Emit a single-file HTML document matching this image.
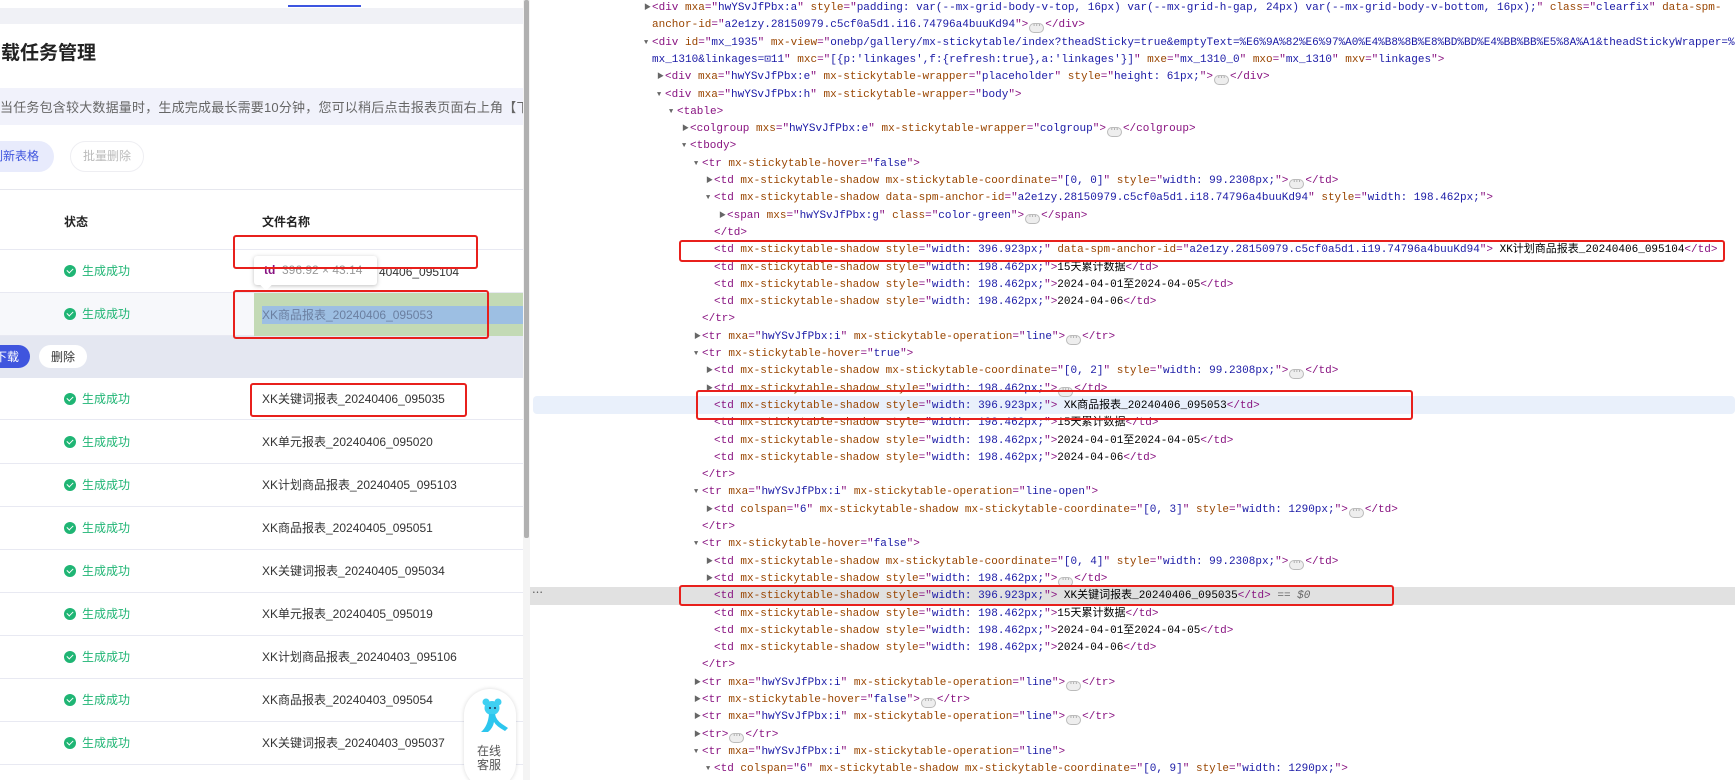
<!DOCTYPE html>
<html><head><meta charset="utf-8">
<style>
*{margin:0;padding:0;box-sizing:border-box}
body{width:1735px;height:780px;overflow:hidden;background:#fff;position:relative;font-family:"Liberation Sans","Noto Sans CJK SC",sans-serif}
.a{position:absolute}
#left{position:absolute;left:0;top:0;width:523px;height:780px;overflow:hidden;background:#fff}
.row{position:absolute;left:0;width:523px;height:43px;border-bottom:1px solid #e8e9f2}
.st{position:absolute;left:64px;top:14px;font-size:12px;color:#1fb574;line-height:14px}
.st i{display:inline-block;width:12px;height:12px;border-radius:50%;background:#1fb574;vertical-align:-2px;margin-right:6px;position:relative}
.st i:after{content:"";position:absolute;left:3px;top:2.5px;width:5px;height:3px;border-left:1.6px solid #fff;border-bottom:1.6px solid #fff;transform:rotate(-45deg)}
.fn{position:absolute;left:262px;top:14px;font-size:12px;color:#333;line-height:14px;white-space:nowrap}
.red{position:absolute;border:2px solid #e8201c;border-radius:3px}
#dev{position:absolute;left:530px;top:0;width:1205px;height:780px;overflow:hidden;font-family:"Liberation Mono","Noto Sans CJK SC",monospace;font-size:11px}
.l{position:absolute;height:17.3px;line-height:17.3px;white-space:nowrap;color:#000}
.t{color:#881280}.n{color:#994500}.v{color:#1a1aa6}
.tr{position:absolute;left:-8px;top:0;font-size:7px;color:#666}
.e{display:inline-block;width:15px;height:10px;border:1px solid #bbb;border-radius:5px;background:#eee;font-size:8px;line-height:6px;text-align:center;color:#666;vertical-align:-1px;margin:0 1px}
</style></head><body>
<div id="left">
  <div class="a" style="left:288px;top:5px;width:73px;height:2px;background:#3d55e0"></div>
  <div class="a" style="left:0;top:8px;width:523px;height:16px;background:#f0f1f6"></div>
  <div class="a" style="left:-18px;top:42px;font-size:19px;font-weight:bold;color:#222;line-height:24px">下载任务管理</div>
  <div class="a" style="left:0;top:88px;width:523px;height:37px;background:#f1f2fb"></div>
  <div class="a" style="left:0;top:100px;font-size:13px;color:#666;line-height:16px;white-space:nowrap;letter-spacing:0.2px">当任务包含较大数据量时，生成完成最长需要10分钟，您可以稍后点击报表页面右上角【下载任务管理】</div>
  <div class="a" style="left:-30px;top:141px;width:84px;height:31px;border-radius:16px;background:#e8ebfc"></div>
  <div class="a" style="left:-9px;top:149px;font-size:12px;color:#3f55de;line-height:15px">刷新表格</div>
  <div class="a" style="left:70px;top:141px;width:74px;height:31px;border-radius:16px;border:1px solid #eeeef2"></div>
  <div class="a" style="left:83px;top:149px;font-size:12px;color:#bbb;line-height:15px">批量删除</div>
  <div class="a" style="left:0;top:189px;width:523px;height:1px;background:#e6e7ee"></div>
  <div class="row" style="top:190px;height:60px"></div>
  <div class="a" style="left:64px;top:213px;font-size:12px;font-weight:bold;color:#222">状态</div>
  <div class="a" style="left:262px;top:213px;font-size:12px;font-weight:bold;color:#222">文件名称</div>
  <div class="row" style="top:250px"><div class="st"><i></i>生成成功</div></div>
  <div class="row" style="top:293px;background:#f7f8fb"><div class="st"><i></i>生成成功</div></div>
  <div class="a" style="left:254px;top:293px;width:269px;height:43px;background:#c3dab5"></div>
  <div class="a" style="left:262px;top:306px;width:261px;height:18px;background:#9dbfe3"></div>
  <div class="a" style="left:262px;top:308px;font-size:12px;color:#6b7fa0;line-height:14px">XK商品报表_20240406_095053</div>
  <div class="a" style="left:0;top:336px;width:523px;height:42px;background:#e4e7f1"></div>
  <div class="a" style="left:-20px;top:345px;width:50px;height:23px;border-radius:12px;background:#3f55de"></div>
  <div class="a" style="left:-5px;top:350px;font-size:12px;color:#fff;line-height:14px">下载</div>
  <div class="a" style="left:39px;top:345px;width:48px;height:23px;border-radius:12px;background:#fff"></div>
  <div class="a" style="left:51px;top:350px;font-size:12px;color:#333;line-height:14px">删除</div>
  <div class="row" style="top:378px;height:42px"><div class="st"><i></i>生成成功</div><div class="fn">XK关键词报表_20240406_095035</div></div>
  <div class="row" style="top:421px"><div class="st"><i></i>生成成功</div><div class="fn">XK单元报表_20240406_095020</div></div>
  <div class="row" style="top:464px"><div class="st"><i></i>生成成功</div><div class="fn">XK计划商品报表_20240405_095103</div></div>
  <div class="row" style="top:507px"><div class="st"><i></i>生成成功</div><div class="fn">XK商品报表_20240405_095051</div></div>
  <div class="row" style="top:550px"><div class="st"><i></i>生成成功</div><div class="fn">XK关键词报表_20240405_095034</div></div>
  <div class="row" style="top:593px"><div class="st"><i></i>生成成功</div><div class="fn">XK单元报表_20240405_095019</div></div>
  <div class="row" style="top:636px"><div class="st"><i></i>生成成功</div><div class="fn">XK计划商品报表_20240403_095106</div></div>
  <div class="row" style="top:679px"><div class="st"><i></i>生成成功</div><div class="fn">XK商品报表_20240403_095054</div></div>
  <div class="row" style="top:722px"><div class="st"><i></i>生成成功</div><div class="fn">XK关键词报表_20240403_095037</div></div>
  <div class="row" style="top:765px"></div>
  <div class="a" style="left:254px;top:256px;width:123px;height:29px;background:#fff;border-radius:3px;box-shadow:0 1px 4px rgba(0,0,0,.25)"></div>
  <div class="a" style="left:262px;top:281px;width:8px;height:8px;background:#fff;transform:rotate(45deg)"></div>
  <div class="a" style="left:264px;top:263px;font-size:12px;line-height:14px;white-space:nowrap"><b style="color:#881280">td</b> <span style="color:#999">&nbsp;396.92 × 43.14</span></div>
  <div class="a" style="left:379px;top:265px;font-size:12px;color:#333;line-height:14px">40406_095104</div>
  <div class="red" style="left:233px;top:235px;width:245px;height:34px"></div>
  <div class="red" style="left:233px;top:290px;width:256px;height:49px"></div>
  <div class="red" style="left:250px;top:383px;width:217px;height:34px"></div>
  <div class="a" style="left:464px;top:689px;width:52px;height:100px;border-radius:26px;background:#fff;box-shadow:0 0 4px rgba(0,0,0,.15)"></div>
  <svg class="a" style="left:476px;top:698px" width="34" height="36" viewBox="0 0 34 36">
    <circle cx="10" cy="4" r="3.5" fill="#3fd0f2"/><circle cx="22" cy="4" r="3.5" fill="#3fd0f2"/>
    <ellipse cx="16" cy="10" rx="7.5" ry="7" fill="#3fd0f2"/>
    <path d="M13 16 L16 16 L19 16 Q20 22 26 26 L32 30 L29 33 Q20 28 18 24 Q17 30 12 34 L5 34 Q12 28 13 16 Z" fill="#2cc6ee"/>
    <circle cx="14" cy="10" r="1" fill="#235"/><circle cx="19" cy="10" r="1" fill="#235"/>
  </svg>
  <div class="a" style="left:477px;top:744px;font-size:12px;color:#555;line-height:14px">在线<br>客服</div>
</div>
<div class="a" style="left:523px;top:0;width:7px;height:780px;background:#f4f4f4"></div>
<div class="a" style="left:524px;top:0;width:5px;height:538px;background:#b0b0b0;border-radius:2px"></div>

<div id="dev">
<div class="a" style="left:3px;top:396px;width:1202px;height:18px;background:#e9f0fb;border-radius:4px"></div>
<div class="a" style="left:0;top:587px;width:1205px;height:18px;background:#e1e1e1"></div>
<div class="a" style="left:2px;top:584px;font-size:11px;color:#555">⋯</div>

<div class="l" style="top:0px;left:122px"><span class="tr">▶</span><span class="t">&lt;div</span> <span class="n">mxa</span><span class="t">="</span><span class="v">hwYSvJfPbx:a</span><span class="t">"</span> <span class="n">style</span><span class="t">="</span><span class="v">padding: var(--mx-grid-body-v-top, 16px) var(--mx-grid-h-gap, 24px) var(--mx-grid-body-v-bottom, 16px);</span><span class="t">"</span> <span class="n">class</span><span class="t">="</span><span class="v">clearfix</span><span class="t">"</span> <span class="n">data-spm-</span></div>
<div class="l" style="top:17.3px;left:122px"><span class="n">anchor-id</span><span class="t">="</span><span class="v">a2e1zy.28150979.c5cf0a5d1.i16.74796a4buuKd94</span><span class="t">"&gt;</span><span class="e">⋯</span><span class="t">&lt;/div&gt;</span></div>
<div class="l" style="top:34.6px;left:122px"><span class="tr">▼</span><span class="t">&lt;div</span> <span class="n">id</span><span class="t">="</span><span class="v">mx_1935</span><span class="t">"</span> <span class="n">mx-view</span><span class="t">="</span><span class="v">onebp/gallery/mx-stickytable/index?theadSticky=true&amp;emptyText=%E6%9A%82%E6%97%A0%E4%B8%8B%E8%BD%BD%E4%BB%BB%E5%8A%A1&amp;theadStickyWrapper=%</span></div>
<div class="l" style="top:51.9px;left:122px"><span class="v">mx_1310&amp;linkages=⊡11</span><span class="t">"</span> <span class="n">mxc</span><span class="t">="</span><span class="v">[{p:'linkages',f:{refresh:true},a:'linkages'}]</span><span class="t">"</span> <span class="n">mxe</span><span class="t">="</span><span class="v">mx_1310_0</span><span class="t">"</span> <span class="n">mxo</span><span class="t">="</span><span class="v">mx_1310</span><span class="t">"</span> <span class="n">mxv</span><span class="t">="</span><span class="v">linkages</span><span class="t">"&gt;</span></div>
<div class="l" style="top:69.2px;left:135px"><span class="tr">▶</span><span class="t">&lt;div</span> <span class="n">mxa</span><span class="t">="</span><span class="v">hwYSvJfPbx:e</span><span class="t">"</span> <span class="n">mx-stickytable-wrapper</span><span class="t">="</span><span class="v">placeholder</span><span class="t">"</span> <span class="n">style</span><span class="t">="</span><span class="v">height: 61px;</span><span class="t">"&gt;</span><span class="e">⋯</span><span class="t">&lt;/div&gt;</span></div>
<div class="l" style="top:86.5px;left:135px"><span class="tr">▼</span><span class="t">&lt;div</span> <span class="n">mxa</span><span class="t">="</span><span class="v">hwYSvJfPbx:h</span><span class="t">"</span> <span class="n">mx-stickytable-wrapper</span><span class="t">="</span><span class="v">body</span><span class="t">"&gt;</span></div>
<div class="l" style="top:103.8px;left:147px"><span class="tr">▼</span><span class="t">&lt;table&gt;</span></div>
<div class="l" style="top:121.1px;left:160px"><span class="tr">▶</span><span class="t">&lt;colgroup</span> <span class="n">mxs</span><span class="t">="</span><span class="v">hwYSvJfPbx:e</span><span class="t">"</span> <span class="n">mx-stickytable-wrapper</span><span class="t">="</span><span class="v">colgroup</span><span class="t">"&gt;</span><span class="e">⋯</span><span class="t">&lt;/colgroup&gt;</span></div>
<div class="l" style="top:138.4px;left:160px"><span class="tr">▼</span><span class="t">&lt;tbody&gt;</span></div>
<div class="l" style="top:155.7px;left:172px"><span class="tr">▼</span><span class="t">&lt;tr</span> <span class="n">mx-stickytable-hover</span><span class="t">="</span><span class="v">false</span><span class="t">"&gt;</span></div>
<div class="l" style="top:173px;left:184px"><span class="tr">▶</span><span class="t">&lt;td</span> <span class="n">mx-stickytable-shadow mx-stickytable-coordinate</span><span class="t">="</span><span class="v">[0, 0]</span><span class="t">"</span> <span class="n">style</span><span class="t">="</span><span class="v">width: 99.2308px;</span><span class="t">"&gt;</span><span class="e">⋯</span><span class="t">&lt;/td&gt;</span></div>
<div class="l" style="top:190.3px;left:184px"><span class="tr">▼</span><span class="t">&lt;td</span> <span class="n">mx-stickytable-shadow data-spm-anchor-id</span><span class="t">="</span><span class="v">a2e1zy.28150979.c5cf0a5d1.i18.74796a4buuKd94</span><span class="t">"</span> <span class="n">style</span><span class="t">="</span><span class="v">width: 198.462px;</span><span class="t">"&gt;</span></div>
<div class="l" style="top:207.6px;left:197px"><span class="tr">▶</span><span class="t">&lt;span</span> <span class="n">mxs</span><span class="t">="</span><span class="v">hwYSvJfPbx:g</span><span class="t">"</span> <span class="n">class</span><span class="t">="</span><span class="v">color-green</span><span class="t">"&gt;</span><span class="e">⋯</span><span class="t">&lt;/span&gt;</span></div>
<div class="l" style="top:224.9px;left:184px"><span class="t">&lt;/td&gt;</span></div>
<div class="l" style="top:242.2px;left:184px"><span class="t">&lt;td</span> <span class="n">mx-stickytable-shadow</span> <span class="n">style</span><span class="t">="</span><span class="v">width: 396.923px;</span><span class="t">"</span> <span class="n">data-spm-anchor-id</span><span class="t">="</span><span class="v">a2e1zy.28150979.c5cf0a5d1.i19.74796a4buuKd94</span><span class="t">"&gt;</span> XK计划商品报表_20240406_095104<span class="t">&lt;/td&gt;</span></div>
<div class="l" style="top:259.5px;left:184px"><span class="t">&lt;td</span> <span class="n">mx-stickytable-shadow</span> <span class="n">style</span><span class="t">="</span><span class="v">width: 198.462px;</span><span class="t">"&gt;</span>15天累计数据<span class="t">&lt;/td&gt;</span></div>
<div class="l" style="top:276.8px;left:184px"><span class="t">&lt;td</span> <span class="n">mx-stickytable-shadow</span> <span class="n">style</span><span class="t">="</span><span class="v">width: 198.462px;</span><span class="t">"&gt;</span>2024-04-01至2024-04-05<span class="t">&lt;/td&gt;</span></div>
<div class="l" style="top:294.1px;left:184px"><span class="t">&lt;td</span> <span class="n">mx-stickytable-shadow</span> <span class="n">style</span><span class="t">="</span><span class="v">width: 198.462px;</span><span class="t">"&gt;</span>2024-04-06<span class="t">&lt;/td&gt;</span></div>
<div class="l" style="top:311.4px;left:172px"><span class="t">&lt;/tr&gt;</span></div>
<div class="l" style="top:328.7px;left:172px"><span class="tr">▶</span><span class="t">&lt;tr</span> <span class="n">mxa</span><span class="t">="</span><span class="v">hwYSvJfPbx:i</span><span class="t">"</span> <span class="n">mx-stickytable-operation</span><span class="t">="</span><span class="v">line</span><span class="t">"&gt;</span><span class="e">⋯</span><span class="t">&lt;/tr&gt;</span></div>
<div class="l" style="top:346px;left:172px"><span class="tr">▼</span><span class="t">&lt;tr</span> <span class="n">mx-stickytable-hover</span><span class="t">="</span><span class="v">true</span><span class="t">"&gt;</span></div>
<div class="l" style="top:363.3px;left:184px"><span class="tr">▶</span><span class="t">&lt;td</span> <span class="n">mx-stickytable-shadow mx-stickytable-coordinate</span><span class="t">="</span><span class="v">[0, 2]</span><span class="t">"</span> <span class="n">style</span><span class="t">="</span><span class="v">width: 99.2308px;</span><span class="t">"&gt;</span><span class="e">⋯</span><span class="t">&lt;/td&gt;</span></div>
<div class="l" style="top:380.6px;left:184px"><span class="tr">▶</span><span class="t">&lt;td</span> <span class="n">mx-stickytable-shadow</span> <span class="n">style</span><span class="t">="</span><span class="v">width: 198.462px;</span><span class="t">"&gt;</span><span class="e">⋯</span><span class="t">&lt;/td&gt;</span></div>
<div class="l" style="top:397.9px;left:184px"><span class="t">&lt;td</span> <span class="n">mx-stickytable-shadow</span> <span class="n">style</span><span class="t">="</span><span class="v">width: 396.923px;</span><span class="t">"&gt;</span> XK商品报表_20240406_095053<span class="t">&lt;/td&gt;</span></div>
<div class="l" style="top:415.2px;left:184px"><span class="t">&lt;td</span> <span class="n">mx-stickytable-shadow</span> <span class="n">style</span><span class="t">="</span><span class="v">width: 198.462px;</span><span class="t">"&gt;</span>15天累计数据<span class="t">&lt;/td&gt;</span></div>
<div class="l" style="top:432.5px;left:184px"><span class="t">&lt;td</span> <span class="n">mx-stickytable-shadow</span> <span class="n">style</span><span class="t">="</span><span class="v">width: 198.462px;</span><span class="t">"&gt;</span>2024-04-01至2024-04-05<span class="t">&lt;/td&gt;</span></div>
<div class="l" style="top:449.8px;left:184px"><span class="t">&lt;td</span> <span class="n">mx-stickytable-shadow</span> <span class="n">style</span><span class="t">="</span><span class="v">width: 198.462px;</span><span class="t">"&gt;</span>2024-04-06<span class="t">&lt;/td&gt;</span></div>
<div class="l" style="top:467.1px;left:172px"><span class="t">&lt;/tr&gt;</span></div>
<div class="l" style="top:484.4px;left:172px"><span class="tr">▼</span><span class="t">&lt;tr</span> <span class="n">mxa</span><span class="t">="</span><span class="v">hwYSvJfPbx:i</span><span class="t">"</span> <span class="n">mx-stickytable-operation</span><span class="t">="</span><span class="v">line-open</span><span class="t">"&gt;</span></div>
<div class="l" style="top:501.7px;left:184px"><span class="tr">▶</span><span class="t">&lt;td</span> <span class="n">colspan</span><span class="t">="</span><span class="v">6</span><span class="t">"</span> <span class="n">mx-stickytable-shadow mx-stickytable-coordinate</span><span class="t">="</span><span class="v">[0, 3]</span><span class="t">"</span> <span class="n">style</span><span class="t">="</span><span class="v">width: 1290px;</span><span class="t">"&gt;</span><span class="e">⋯</span><span class="t">&lt;/td&gt;</span></div>
<div class="l" style="top:519px;left:172px"><span class="t">&lt;/tr&gt;</span></div>
<div class="l" style="top:536.3px;left:172px"><span class="tr">▼</span><span class="t">&lt;tr</span> <span class="n">mx-stickytable-hover</span><span class="t">="</span><span class="v">false</span><span class="t">"&gt;</span></div>
<div class="l" style="top:553.6px;left:184px"><span class="tr">▶</span><span class="t">&lt;td</span> <span class="n">mx-stickytable-shadow mx-stickytable-coordinate</span><span class="t">="</span><span class="v">[0, 4]</span><span class="t">"</span> <span class="n">style</span><span class="t">="</span><span class="v">width: 99.2308px;</span><span class="t">"&gt;</span><span class="e">⋯</span><span class="t">&lt;/td&gt;</span></div>
<div class="l" style="top:570.9px;left:184px"><span class="tr">▶</span><span class="t">&lt;td</span> <span class="n">mx-stickytable-shadow</span> <span class="n">style</span><span class="t">="</span><span class="v">width: 198.462px;</span><span class="t">"&gt;</span><span class="e">⋯</span><span class="t">&lt;/td&gt;</span></div>
<div class="l" style="top:588.2px;left:184px"><span class="t">&lt;td</span> <span class="n">mx-stickytable-shadow</span> <span class="n">style</span><span class="t">="</span><span class="v">width: 396.923px;</span><span class="t">"&gt;</span> XK关键词报表_20240406_095035<span class="t">&lt;/td&gt;</span> <span style="color:#666;font-style:italic">== $0</span></div>
<div class="l" style="top:605.5px;left:184px"><span class="t">&lt;td</span> <span class="n">mx-stickytable-shadow</span> <span class="n">style</span><span class="t">="</span><span class="v">width: 198.462px;</span><span class="t">"&gt;</span>15天累计数据<span class="t">&lt;/td&gt;</span></div>
<div class="l" style="top:622.8px;left:184px"><span class="t">&lt;td</span> <span class="n">mx-stickytable-shadow</span> <span class="n">style</span><span class="t">="</span><span class="v">width: 198.462px;</span><span class="t">"&gt;</span>2024-04-01至2024-04-05<span class="t">&lt;/td&gt;</span></div>
<div class="l" style="top:640.1px;left:184px"><span class="t">&lt;td</span> <span class="n">mx-stickytable-shadow</span> <span class="n">style</span><span class="t">="</span><span class="v">width: 198.462px;</span><span class="t">"&gt;</span>2024-04-06<span class="t">&lt;/td&gt;</span></div>
<div class="l" style="top:657.4px;left:172px"><span class="t">&lt;/tr&gt;</span></div>
<div class="l" style="top:674.7px;left:172px"><span class="tr">▶</span><span class="t">&lt;tr</span> <span class="n">mxa</span><span class="t">="</span><span class="v">hwYSvJfPbx:i</span><span class="t">"</span> <span class="n">mx-stickytable-operation</span><span class="t">="</span><span class="v">line</span><span class="t">"&gt;</span><span class="e">⋯</span><span class="t">&lt;/tr&gt;</span></div>
<div class="l" style="top:692px;left:172px"><span class="tr">▶</span><span class="t">&lt;tr</span> <span class="n">mx-stickytable-hover</span><span class="t">="</span><span class="v">false</span><span class="t">"&gt;</span><span class="e">⋯</span><span class="t">&lt;/tr&gt;</span></div>
<div class="l" style="top:709.3px;left:172px"><span class="tr">▶</span><span class="t">&lt;tr</span> <span class="n">mxa</span><span class="t">="</span><span class="v">hwYSvJfPbx:i</span><span class="t">"</span> <span class="n">mx-stickytable-operation</span><span class="t">="</span><span class="v">line</span><span class="t">"&gt;</span><span class="e">⋯</span><span class="t">&lt;/tr&gt;</span></div>
<div class="l" style="top:726.6px;left:172px"><span class="tr">▶</span><span class="t">&lt;tr&gt;</span><span class="e">⋯</span><span class="t">&lt;/tr&gt;</span></div>
<div class="l" style="top:743.9px;left:172px"><span class="tr">▼</span><span class="t">&lt;tr</span> <span class="n">mxa</span><span class="t">="</span><span class="v">hwYSvJfPbx:i</span><span class="t">"</span> <span class="n">mx-stickytable-operation</span><span class="t">="</span><span class="v">line</span><span class="t">"&gt;</span></div>
<div class="l" style="top:761.2px;left:184px"><span class="tr">▼</span><span class="t">&lt;td</span> <span class="n">colspan</span><span class="t">="</span><span class="v">6</span><span class="t">"</span> <span class="n">mx-stickytable-shadow mx-stickytable-coordinate</span><span class="t">="</span><span class="v">[0, 9]</span><span class="t">"</span> <span class="n">style</span><span class="t">="</span><span class="v">width: 1290px;</span><span class="t">"&gt;</span></div>

<div class="red" style="left:149px;top:240px;width:1046px;height:22px"></div>
<div class="red" style="left:166px;top:390px;width:717px;height:30px"></div>
<div class="red" style="left:149px;top:585px;width:715px;height:21px"></div>
</div>
</body></html>
